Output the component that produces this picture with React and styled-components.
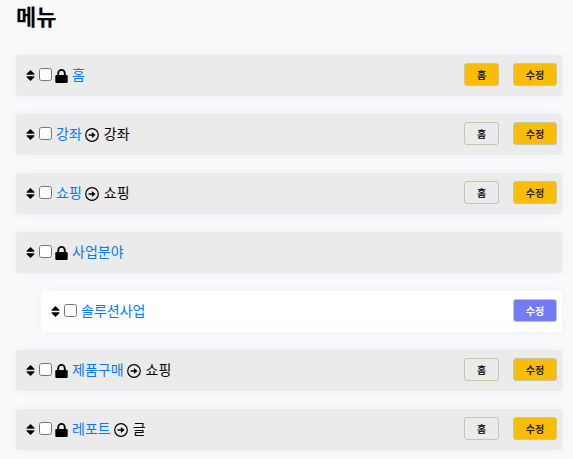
import React from 'react';
import styled, { createGlobalStyle } from 'styled-components';

const GlobalStyle = createGlobalStyle`
  *,
  *::before,
  *::after {
    box-sizing: border-box;
  }

  body {
    margin: 0;
    background-color: #f9fafc;
    color: #000;
    font-family: 'Noto Sans CJK KR', sans-serif;
    font-size: 14px;
    line-height: 21px;
  }
`;

const Page = styled.main`
  padding: 0 11px 9px 16px;
`;

const Title = styled.h1`
  margin: 0 0 24px;
  font-size: 22px;
  font-weight: 700;
  line-height: 31px;
`;

const MenuList = styled.ul`
  display: flex;
  flex-direction: column;
  gap: 18px;
  margin: 0;
  padding: 0;
  list-style: none;
`;

const Row = styled.li`
  display: flex;
  align-items: center;
  justify-content: space-between;
  height: 41px;
  margin-left: ${props => (props.$child ? '25px' : 0)};
  padding: 0 5px 0 10px;
  border-radius: 3px;
  background-color: ${props => (props.$child ? '#fff' : '#ebebeb')};
  box-shadow: 0 0 12px rgba(60, 70, 110, 0.06);
`;

const Info = styled.div`
  display: flex;
  align-items: center;
`;

const SortIcon = styled.svg`
  width: 9px;
  height: 11px;
  margin-right: 4px;
`;

const Check = styled.input`
  width: 13px;
  height: 13px;
  margin: 0 3px 2px 0;
`;

const LockIcon = styled.svg`
  width: 13px;
  height: 14px;
`;

const MenuLink = styled.a`
  margin: 0 0 2px ${props => (props.$locked ? '4px' : '1px')};
  color: #007bff;
  text-decoration: none;
`;

const TargetName = styled.span`
  margin-bottom: 2px;
`;

const ArrowIcon = styled.svg`
  width: 14px;
  height: 14px;
  margin: 0 5px 0 3px;
`;

const Actions = styled.div`
  display: flex;
  gap: 14px;
  margin-bottom: 2px;
`;

const colors = {
  plain: { background: 'transparent', text: '#212529' },
  yellow: { background: '#fbbc05', text: '#212529' },
  violet: { background: '#727cf5', text: '#fff' },
};

const Button = styled.button`
  width: ${props => (props.$short ? '35px' : '44px')};
  height: 23px;
  padding: 0;
  border: 1px solid #c5c8a5;
  border-radius: 3px;
  background-color: ${props => colors[props.$color].background};
  color: ${props => colors[props.$color].text};
  font-family: inherit;
  font-size: 10px;
  font-weight: 700;
  line-height: 21px;
  cursor: pointer;
`;

const menus = [
  { id: 1, name: '홈', locked: true, home: 'yellow' },
  { id: 2, name: '강좌', target: '강좌', home: 'plain' },
  { id: 3, name: '쇼핑', target: '쇼핑', home: 'plain' },
  { id: 4, name: '사업분야', locked: true, group: true },
  { id: 5, name: '솔루션사업', child: true },
  { id: 6, name: '제품구매', locked: true, target: '쇼핑', home: 'plain' },
  { id: 7, name: '레포트', locked: true, target: '글', home: 'plain' },
];

const Sort = () => (
  <SortIcon viewBox="0 0 9 11" aria-hidden="true">
    <path d="M4.5 0 8.4 3.7Q8.8 4.7 8 4.7H1Q.2 4.7.6 3.7ZM4.5 11 .6 7.3Q.2 6.3 1 6.3H8Q8.8 6.3 8.4 7.3Z" />
  </SortIcon>
);

const Lock = () => (
  <LockIcon viewBox="0 0 13 14" aria-hidden="true">
    <path
      d="M3.2 7V4.2a3.3 3.3 0 0 1 6.6 0V7"
      fill="none"
      stroke="#000"
      strokeWidth="1.9"
    />
    <rect x="0.3" y="6" width="12.4" height="8" rx="1.3" />
  </LockIcon>
);

const Arrow = () => (
  <ArrowIcon viewBox="0 0 14 14" aria-hidden="true">
    <circle cx="7" cy="7" r="6.3" fill="none" stroke="#000" strokeWidth="1.2" />
    <path d="M3.6 6.2H6.9V4L10.6 7 6.9 10V7.8H3.6Z" />
  </ArrowIcon>
);

const MenuRow = ({ menu }) => (
  <Row $child={menu.child}>
    <Info>
      <Sort />
      <Check type="checkbox" aria-labelledby={`menu-${menu.id}`} />
      {menu.locked && <Lock />}
      <MenuLink id={`menu-${menu.id}`} href="#" $locked={menu.locked}>
        {menu.name}
      </MenuLink>
      {menu.target && (
        <>
          <Arrow />
          <TargetName>{menu.target}</TargetName>
        </>
      )}
    </Info>
    {!menu.group && (
      <Actions>
        {menu.home && (
          <Button type="button" $color={menu.home} $short>
            홈
          </Button>
        )}
        <Button type="button" $color={menu.child ? 'violet' : 'yellow'}>
          수정
        </Button>
      </Actions>
    )}
  </Row>
);

const App = () => (
  <>
    <GlobalStyle />
    <Page>
      <Title>메뉴</Title>
      <MenuList>
        {menus.map(menu => (
          <MenuRow key={menu.id} menu={menu} />
        ))}
      </MenuList>
    </Page>
  </>
);

export default App;
